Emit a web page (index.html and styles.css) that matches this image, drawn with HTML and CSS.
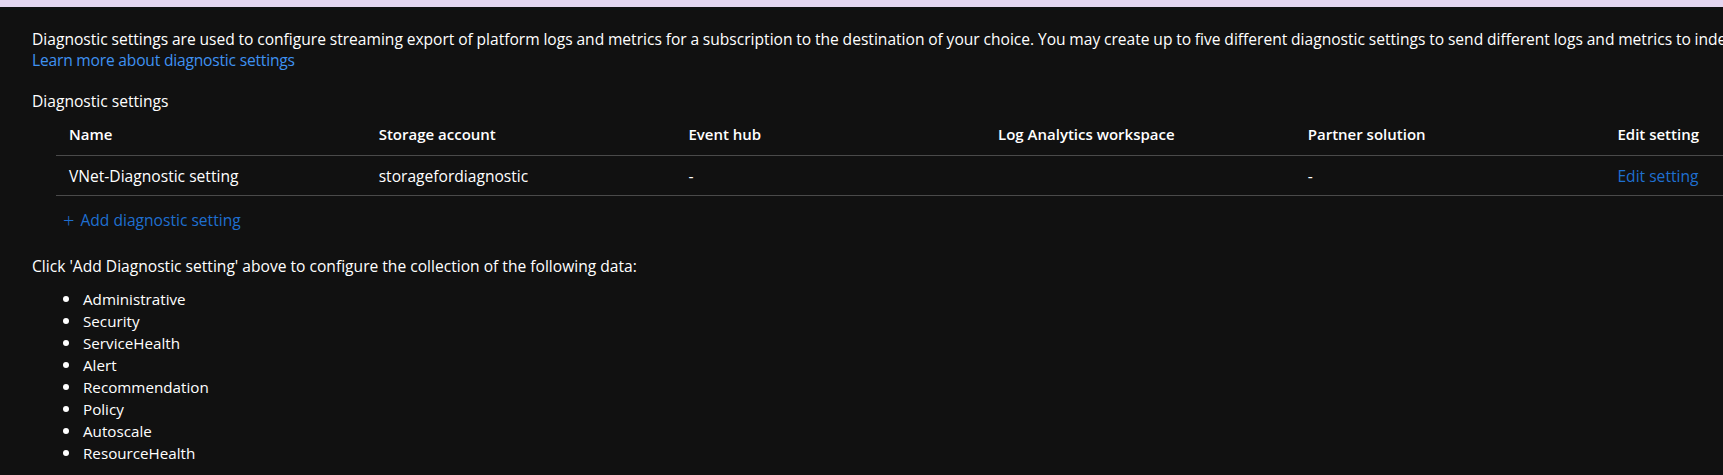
FILE: index.html
```html
<!DOCTYPE html>
<html lang="en">
<head>
<meta charset="utf-8">
<title>Diagnostic settings</title>
<link rel="stylesheet" href="styles.css">
</head>
<body>
<div class="topband"></div>
<main class="content">
  <p class="intro">Diagnostic settings are used to configure streaming export of platform logs and metrics for a subscription to the destination of your choice. You may create up to five different diagnostic settings to send different logs and metrics to independent destinations.<br><a class="link-light" href="#">Learn more about diagnostic settings</a></p>

  <h2 class="section-title">Diagnostic settings</h2>

  <div class="table">
    <div class="row head">
      <div class="cell">Name</div>
      <div class="cell">Storage account</div>
      <div class="cell">Event hub</div>
      <div class="cell">Log Analytics workspace</div>
      <div class="cell">Partner solution</div>
      <div class="cell">Edit setting</div>
    </div>
    <div class="row body">
      <div class="cell">VNet-Diagnostic setting</div>
      <div class="cell">storagefordiagnostic</div>
      <div class="cell">-</div>
      <div class="cell"></div>
      <div class="cell">-</div>
      <div class="cell"><a class="link" href="#">Edit setting</a></div>
    </div>
  </div>

  <a class="add link" href="#"><span class="plus">+</span>Add diagnostic setting</a>

  <p class="click">Click 'Add Diagnostic setting' above to configure the collection of the following data:</p>
  <ul class="datalist">
    <li>Administrative</li>
    <li>Security</li>
    <li>ServiceHealth</li>
    <li>Alert</li>
    <li>Recommendation</li>
    <li>Policy</li>
    <li>Autoscale</li>
    <li>ResourceHealth</li>
  </ul>
</main>
</body>
</html>
```

FILE: styles.css
```css
html, body {
  margin: 0;
  padding: 0;
  background: #111111;
  overflow: hidden;
}
body {
  font-family: "Open Sans", "Noto Sans", sans-serif;
  font-size: 15.6px;
  color: #ffffff;
  width: 1723px;
  height: 475px;
}
.topband {
  height: 7px;
  background: #e4d6f0;
}
.content {
  width: 2000px;
  padding: 22px 0 0 32px;
  box-sizing: border-box;
}
.intro {
  margin: 0;
  line-height: 21px;
  white-space: nowrap;
  word-spacing: -0.3px;
}
a {
  text-decoration: none;
}
.link-light {
  color: #3f92f2;
  letter-spacing: -0.2px;
  word-spacing: 0;
}
.link {
  color: #1f6fd0;
}
.section-title {
  margin: 20px 0 0 0;
  font-size: inherit;
  font-weight: 400;
  line-height: 21px;
}
.table {
  margin-left: 24px;
  margin-top: 0;
}
.row {
  display: grid;
  grid-template-columns: repeat(6, 309.7px);
  border-bottom: 1px solid #4a4a4a;
}
.row.head {
  height: 43px;
  align-items: center;
  font-weight: 600;
  font-size: 15px;
}
.row.body {
  height: 39px;
  align-items: center;
}
.cell {
  padding-left: 13px;
  white-space: nowrap;
}
.add {
  display: flex;
  align-items: center;
  margin: 14px 0 0 31px;
  line-height: 21px;
  width: max-content;
}
.plus {
  font-size: 20px;
  font-weight: 300;
  margin-right: 6px;
  line-height: 21px;
}
.click {
  margin: 25px 0 0 0;
  line-height: 21px;
}
.datalist {
  list-style: none;
  margin: 11px 0 0 0;
  padding: 0 0 0 31px;
  font-size: 15.2px;
}
.datalist li {
  display: flex;
  align-items: center;
  line-height: 22px;
}
.datalist li::before {
  content: "";
  width: 6px;
  height: 6px;
  border-radius: 50%;
  background: #ffffff;
  margin-right: 14px;
}
```
